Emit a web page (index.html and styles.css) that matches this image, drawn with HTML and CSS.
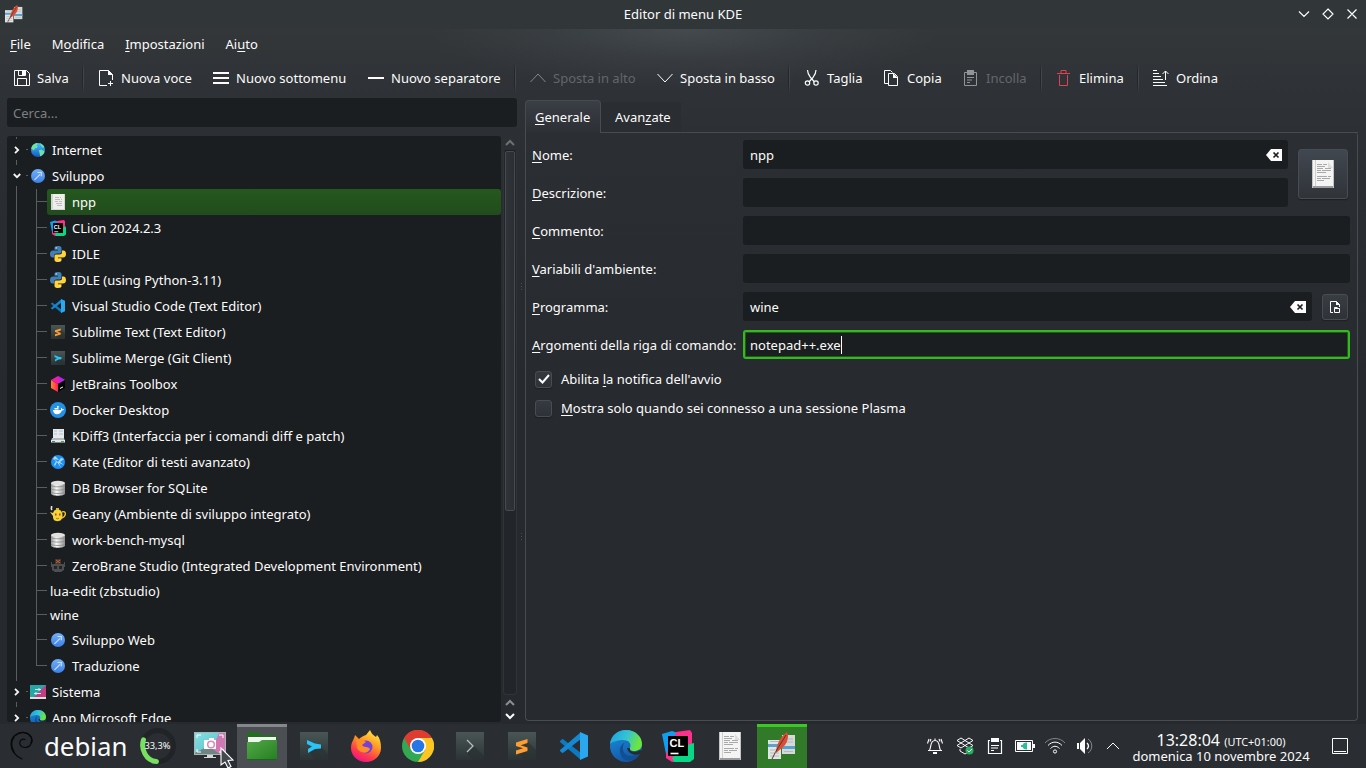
FILE: index.html
```html
<!DOCTYPE html>
<html lang="it">
<head>
<meta charset="utf-8">
<title>Editor di menu KDE</title>
<link rel="stylesheet" href="styles.css">
</head>
<body>
<svg class="defs" width="0" height="0" aria-hidden="true">
  <defs>
    <linearGradient id="gDark" x1="0" y1="0" x2="0" y2="1"><stop offset="0" stop-color="#4a5656"/><stop offset="1" stop-color="#2b3335"/></linearGradient>
    <linearGradient id="gGlobe" x1="0" y1="0" x2="0" y2="1"><stop offset="0" stop-color="#49c2ff"/><stop offset="1" stop-color="#1559c4"/></linearGradient>
    <linearGradient id="gDev" x1="0" y1="0" x2="0" y2="1"><stop offset="0" stop-color="#72b1fb"/><stop offset="1" stop-color="#3d7fe4"/></linearGradient>
    <linearGradient id="gDb" x1="0" y1="0" x2="1" y2="0"><stop offset="0" stop-color="#9a9a9a"/><stop offset=".4" stop-color="#fafafa"/><stop offset="1" stop-color="#8c8c8c"/></linearGradient>
    <linearGradient id="gEdgeTop" x1="0" y1="0" x2="1" y2=".3"><stop offset="0" stop-color="#1ba0dc"/><stop offset=".55" stop-color="#35c1d6"/><stop offset="1" stop-color="#6ce63c"/></linearGradient>
    <linearGradient id="gEdge" x1="0" y1="0" x2=".4" y2="1"><stop offset="0" stop-color="#1c93e0"/><stop offset="1" stop-color="#1358a8"/></linearGradient>
    <linearGradient id="gFox" x1=".8" y1="0" x2=".3" y2="1"><stop offset="0" stop-color="#fff04a"/><stop offset=".4" stop-color="#ff9a22"/><stop offset=".75" stop-color="#ff3a4c"/><stop offset="1" stop-color="#ee1186"/></linearGradient>
    <linearGradient id="gScreen" x1="0" y1="0" x2="1" y2="1"><stop offset="0" stop-color="#7fe0e4"/><stop offset="1" stop-color="#5cb9c6"/></linearGradient>
    <linearGradient id="gFolder" x1="0" y1="0" x2="1" y2="1"><stop offset="0" stop-color="#52a945"/><stop offset="1" stop-color="#257e24"/></linearGradient>
    <linearGradient id="gTool" x1="0" y1="0" x2="1" y2="0"><stop offset="0" stop-color="#ff8a1f"/><stop offset="1" stop-color="#fe1e62"/></linearGradient>
  </defs>
  <symbol id="menuedit" viewBox="0 0 28 28">
    <path d="M0 8h13v19H0z" fill="#e2e5e5"/><path d="M14 3h13v19H14z" fill="#d5d9da"/>
    <path d="M0 12h13v3H0zM14 14h13v3H14z" fill="#5aa3d0"/>
    <path d="M2 9.500h9M2 18h9M2 21h9M2 24h9M16 7h9M16 10h9M16 19.500h9" stroke="#b4babb" stroke-width="1"/>
    <path d="M19 0c2 3 1 9-2 13-2 3-6 5-9 8 0-8 4-16 11-21z" fill="#d65036"/><path d="M18 3C14 10 8 18 4 27" stroke="#6b2a22" stroke-width="1" fill="none"/>
  </symbol>
  <symbol id="globe" viewBox="0 0 16 16"><circle cx="8" cy="8" r="7" fill="url(#gGlobe)"/><path d="M1.200 6.500C2 3 4.500 1.200 7 1.100c1 .8.500 1.700-.600 2.100l1.300 1.200-1 1.500-2 .6-.8 2zM9.600 1.300c2 .4 4 2 4.800 4l-2 .2-1.400-2zM8.800 8.200l2.700-.700 3 2c-.6 2.400-2 4-4.400 4.800l-.4-2.600z" fill="#6de3a2"/></symbol>
  <symbol id="dev" viewBox="0 0 16 16"><circle cx="8" cy="8" r="7" fill="url(#gDev)"/><path d="M4.500 11.800l5.500-5.500M7.500 4.500h3.800v3.700" stroke="#c5dffe" stroke-width="1.200" fill="none"/></symbol>
  <symbol id="doc" viewBox="0 0 22 28"><path d="M0 0h22v28H0z" fill="#f4f4f4"/><path d="M0 26h22v2H0z" fill="#9b9b9b"/><path d="M.5 0v28M21.500 0v28" stroke="#c4c4c4"/><path d="M3.500 0v26" stroke="#cfcfcf"/><path d="M16 2l5 6h-5z" fill="#ddd"/><path d="M5 4.500h5m1 0h4M5 6.500h8M5 8.500h6m2 0h6M5 10.500h4m1 0h9M5 12.500h9M5 16.500h10m1 0h3M5 18.500h4m1 0h8M5 20.500h7" stroke="#a9a9a9"/></symbol>
  <symbol id="docs" viewBox="0 0 16 16"><path d="M1 0h14v16H1z" fill="#d3d4d3"/><path d="M3 0h11v15H3z" fill="#eeeeec"/><path d="M5 3.500h4m1 0h1M5 5.500h5m1 0h1M5 7.500h3m1 0h3M6 9.500h6M7 11.500h5" stroke="#bcbdbc"/></symbol>
  <symbol id="clion" viewBox="0 0 32 32"><path d="M0 4l10-3 9 3-6 20H4z" fill="#109ff0"/><path d="M14 2l14-2 2 3v14l-6 4L12 9z" fill="#fd318c"/><path d="M4 24l4-7 15 13-13 2-6-4z" fill="#fd318c"/><path d="M32 13v16l-4 3H12l-2-4 15-13z" fill="#08d885"/><path d="M6 6h20v20H6z"/><path d="M8.500 23.500h8" stroke="#fff" stroke-width="1.600"/><text x="7.500" y="17" class="clion-letters">CL</text></symbol>
  <symbol id="python" viewBox="0 0 16 16"><path d="M7.800 0c-2.500 0-3.300.7-3.300 2v1.700H8v.8H3C1 4.500 0 5.800 0 8c0 2.100.9 3.500 2.600 3.500H4V9.700c0-1.300 1-2.300 2.500-2.300h3.300c1 0 1.700-.7 1.700-1.700V2C11.500.6 10 0 7.800 0z" fill="#4080b7"/><path d="M8.200 16c2.500 0 3.300-.7 3.300-2v-1.700H8v-.8h5c2 0 3-1.300 3-3.500 0-2.100-.9-3.500-2.600-3.500H12v1.800c0 1.300-1 2.300-2.500 2.300H6.200c-1 0-1.700.7-1.700 1.700V14c0 1.400 1.500 2 3.700 2z" fill="#ffd43b"/><circle cx="6.200" cy="1.900" r=".7" fill="#fff"/><circle cx="9.800" cy="14.100" r=".7" fill="#fff"/></symbol>
  <symbol id="vscode" viewBox="0 0 28 28"><path d="M0 9l2.500-2.200L21 21v7L0 10z" fill="#0d79c1"/><path d="M0 19l2.500 2.200L21 7V0L0 18z" fill="#1488d2"/><path d="M20 0l8 3.500v21L20 28z" fill="#2aa7ef"/></symbol>
  <symbol id="subtext" viewBox="0 0 28 28"><path d="M0 0h28v28H0z" fill="url(#gDark)"/><path d="M20 10l8 8v10H18l-10-8z" fill="#293031" opacity=".6"/><path d="M8 10.500L19.500 7v4l-7 2.300 7 2.200v3.500L8 22.500V18.500l7-2.200-7-2.300z" fill="#ff9d2e"/></symbol>
  <symbol id="submerge" viewBox="0 0 28 28"><path d="M0 0h28v28H0z" fill="url(#gDark)"/><path d="M20 14l8 8v6H16L8 19z" fill="#293031" opacity=".6"/><path d="M7 8l8 3.500 6 1v4l-6 .5L8 21v-4l4-2.500L7 12z" fill="#28c4f7"/></symbol>
  <symbol id="term" viewBox="0 0 28 28"><path d="M0 0h28v28H0z" fill="url(#gDark)"/><path d="M18 14l10 10v4H17l-6-7z" fill="#2b3132" opacity=".7"/><path d="M11 8l6 6-6 6" fill="none" stroke="#b6bbbb" stroke-width="1.300"/></symbol>
  <symbol id="toolbox" viewBox="0 0 16 16"><path d="M1 4l7 4v8l-7-4z" fill="url(#gTool)"/><path d="M1 4l7-4 7 4-7 4z" fill="#f01fa0"/><path d="M8 0l7 4-5 3z" fill="#a72bea"/><path d="M8 8l7-4v8l-7 4z" fill="#050505"/><path d="M10 12.500l3-1.600" stroke="#fff"/></symbol>
  <symbol id="docker" viewBox="0 0 16 16"><circle cx="8" cy="8" r="8" fill="#2391e6"/><path d="M3 8h8c.3-1 .1-1.700-.3-2.200 1 .1 1.500.6 1.600 1.500.8-.2 1.400 0 1.800.2-.5.800-1.200 1.100-2.200 1.100C11 11 9.500 12.200 7 12.200S3.200 10.500 3 8zM4.500 6h4v1.500h-4zM7 4h1.700v1.700H7z" fill="#fff"/></symbol>
  <symbol id="kdiff" viewBox="0 0 16 16"><path d="M3 1h11v10H3z" fill="#e7eaeb"/><path d="M4 3h3m2 0h4M4 6h3m2 0h4" stroke="#a9c0d8"/><path d="M2 10h12l1 3H1z" fill="#b4babc"/><path d="M1 12h14v2.500H1z" fill="#e4e7e7"/><path d="M2 13.500h3" stroke="#4378a7"/><path d="M11 13.500h3" stroke="#44a15a"/></symbol>
  <symbol id="kate" viewBox="0 0 16 16"><circle cx="8" cy="8" r="7" fill="#1d91f3"/><path d="M5 2l4 4-5-1 4 3 3-4 3 1-4 3 4 3-5-2 2 5-4-6-2 4-1-1 2-4-3-2z" fill="#a9daff"/></symbol>
  <symbol id="db" viewBox="0 0 16 16"><path d="M1 3v10.500c0 3 14 3 14 0V3z" fill="url(#gDb)"/><ellipse cx="8" cy="3" rx="7" ry="2.200" fill="#e2e2e2"/><path d="M1 5.300c1 2 13 2 14 0M1 8.600c1 2 13 2 14 0M1 12c1 2 13 2 14 0" fill="none" stroke="#858585" stroke-width=".8"/></symbol>
  <symbol id="geany" viewBox="0 0 16 16"><path d="M4 5c1-2 6-2 7 0 2 2 2 7 0 9-1 1.500-6 1.500-7 0C3 13 3 11 3 10L0 6l3 1z" fill="#f3d53b"/><path d="M12 6c4-2 5 4 0 6" fill="none" stroke="#e9c431" stroke-width="1.400"/><path d="M1 0c2 1-1 2 1 4" fill="none" stroke="#e6e2d8" stroke-width="1.600"/><path d="M6 2h3v2H6z" fill="#d9b62c"/><path d="M5 7.500h1.500v2H5zM9 7.500h1.500v2H9z" fill="#c0391f"/><path d="M6 12c1 1 2 1 3 0" fill="none" stroke="#a86812"/></symbol>
  <symbol id="zero" viewBox="0 0 16 16"><path d="M5 1h6v5H5z" fill="#48352c"/><path d="M6 2l4 3m0-3L6 5" stroke="#c56335"/><path d="M2 6h12v6l-3 2H5l-3-2z" fill="#4c4e51"/><path d="M1.500 4v5m13-5v5" stroke="#4c4f51"/><path d="M4 8h3v3H4zM9 8h3v3H9z" fill="#222427"/></symbol>
  <symbol id="system" viewBox="0 0 16 14"><path d="M0 0h16v13H0z" fill="#27a6a5"/><path d="M16 0v13H3z" fill="#c43c83"/><path d="M0 12h16v2H0z" fill="#dedfe1"/><path d="M5 4.500h6M9 3v3M4 8.500h7M6 7v3" stroke="#d5ecec"/></symbol>
  <symbol id="edge" viewBox="0 0 32 32"><circle cx="16" cy="16" r="16" fill="url(#gEdge)"/><path d="M0 14C1 5 8 0 16 0c10 0 16 7 16 14 0 5-4 7-8 7-3 0-5-1-4-3 2-5-2-8-7-8C8 10 2 12 0 14z" fill="url(#gEdgeTop)"/><path d="M19 12c-8-2-9 14 2 14 4 0 7-2 9-3-4 10-18 11-20-1-1-5 3-11 9-10z" fill="#124f92"/><path d="M20 18c-1 4 6 5 10 2l2 1-2 3c-5 2-12 0-13-6z" fill="#282c31"/></symbol>
  <symbol id="clear" viewBox="0 0 16 12"><path d="M5 0h11v12H5L0 6z" fill="#fcfcfc"/><path d="M7.500 3.500l5 5m0-5l-5 5" stroke="#1b1e20" stroke-width="1.700"/></symbol>
  <symbol id="chev" viewBox="0 0 6 8"><path d="M1 .8L4.200 4 1 7.200" fill="none" stroke="#f4f4f4" stroke-width="1.800"/></symbol>
</svg>

<header class="titlebar">
  <svg class="app-icon" width="18" height="18"><use href="#menuedit"/></svg>
  <span>Editor di menu KDE</span>
  <svg class="winbtns" width="64" height="16" viewBox="0 0 64 16" fill="none" stroke="#fcfcfc" stroke-width="1.200"><path d="M5 5.500l5 5 5-5M34 3l5 5-5 5-5-5zM53.500 3.500l9 9m0-9l-9 9"/></svg>
</header>
<div class="window">
  <nav class="menubar"><span><u>F</u>ile</span><span>M<u>o</u>difica</span><span><u>I</u>mpostazioni</span><span>Ai<u>u</u>to</span></nav>
  <div class="toolbar">
    <span class="tool"><svg width="16" height="16" fill="none" stroke="#fcfcfc"><path d="M.5.500h12l3 3v12H.5zM4.500.500v5h7v-5M3.500 15.500v-7h9v7"/><path d="M8 1h3v4H8z" fill="#fcfcfc" stroke="none"/></svg>Salva</span>
    <i class="sep"></i>
    <span class="tool"><svg width="16" height="16" fill="none" stroke="#fcfcfc"><path d="M9 15.500H1.500V.500h9l4 4V10M12.500 11v5M10 13.500h5"/><path d="M10 0l5 5h-5z" fill="#fcfcfc" stroke="none"/></svg>Nuova voce</span>
    <span class="tool"><svg width="16" height="16"><path d="M0 2h16v2H0zm0 5h16v2H0zm0 5h16v2H0z" fill="#fcfcfc"/></svg>Nuovo sottomenu</span>
    <span class="tool"><svg width="16" height="16"><path d="M0 7h16v2H0z" fill="#fcfcfc"/></svg>Nuovo separatore</span>
    <i class="sep"></i>
    <span class="tool off"><svg width="16" height="16" fill="none" stroke="#85888a"><path d="M.500 12L8 4l7.500 8"/></svg>Sposta in alto</span>
    <span class="tool"><svg width="16" height="16" fill="none" stroke="#fcfcfc"><path d="M.500 4L8 12l7.500-8"/></svg>Sposta in basso</span>
    <i class="sep"></i>
    <span class="tool"><svg width="16" height="16" fill="none" stroke="#fcfcfc" stroke-width="1.200"><path d="M3.500 0c0 4 2 6 3.500 8l3.500 4M12 0c0 4-2 6-3.500 8L5 12"/><circle cx="3.500" cy="13" r="2.200"/><circle cx="12" cy="13" r="2.200"/></svg>Taglia</span>
    <span class="tool"><svg width="16" height="16" fill="none" stroke="#fcfcfc"><path d="M4.500 13.500h-4V.500h6l2 2M4.500 3.500h6l3 3v9h-9z"/><path d="M9 3l5 5H9z" fill="#fcfcfc" stroke="none"/></svg>Copia</span>
    <span class="tool off"><svg width="16" height="16" fill="none" stroke="#929496"><path d="M4 2.500H1.500v13h12v-13H11M4 7.500h7M4 10h5M4 12.500h3"/><path d="M4 0h7v5H4z" fill="#929496" stroke="none"/></svg>Incolla</span>
    <i class="sep"></i>
    <span class="tool"><svg width="16" height="16" fill="none" stroke="#da4453"><path d="M1 3.500h13M5 3V.500h5V3M3.500 5v10.500h8V5"/></svg>Elimina</span>
    <i class="sep"></i>
    <span class="tool"><svg width="16" height="16" fill="none" stroke="#fcfcfc"><path d="M0 .500h4M0 3.500h6M0 6.500h8M0 9.500h10M0 12.500h12M0 15.500h14M12.500 10V1M9.500 4l3-3 3 3"/></svg>Ordina</span>
  </div>
  <main class="content">
    <section class="left">
      <div class="search">Cerca...</div>
      <div class="tree-area">
        <div class="tree">
          <div class="row top first"><svg class="exp" width="6" height="8"><use href="#chev"/></svg><svg width="16" height="16"><use href="#globe"/></svg>Internet</div>
          <div class="row top"><svg class="exp open" width="6" height="8"><use href="#chev"/></svg><svg width="16" height="16"><use href="#dev"/></svg>Sviluppo</div>
          <div class="row sub selected"><span><svg width="16" height="16"><use href="#docs"/></svg>npp</span></div>
          <div class="row sub"><span><svg width="16" height="16"><use href="#clion"/></svg>CLion 2024.2.3</span></div>
          <div class="row sub"><span><svg width="16" height="16"><use href="#python"/></svg>IDLE</span></div>
          <div class="row sub"><span><svg width="16" height="16"><use href="#python"/></svg>IDLE (using Python-3.11)</span></div>
          <div class="row sub"><span><svg class="small" width="16" height="16"><use href="#vscode"/></svg>Visual Studio Code (Text Editor)</span></div>
          <div class="row sub"><span><svg class="small" width="16" height="16"><use href="#subtext"/></svg>Sublime Text (Text Editor)</span></div>
          <div class="row sub"><span><svg class="small" width="16" height="16"><use href="#submerge"/></svg>Sublime Merge (Git Client)</span></div>
          <div class="row sub"><span><svg width="16" height="16"><use href="#toolbox"/></svg>JetBrains Toolbox</span></div>
          <div class="row sub"><span><svg width="16" height="16"><use href="#docker"/></svg>Docker Desktop</span></div>
          <div class="row sub"><span><svg width="16" height="16"><use href="#kdiff"/></svg>KDiff3 (Interfaccia per i comandi diff e patch)</span></div>
          <div class="row sub"><span><svg width="16" height="16"><use href="#kate"/></svg>Kate (Editor di testi avanzato)</span></div>
          <div class="row sub"><span><svg width="16" height="16"><use href="#db"/></svg>DB Browser for SQLite</span></div>
          <div class="row sub"><span><svg width="16" height="16"><use href="#geany"/></svg>Geany (Ambiente di sviluppo integrato)</span></div>
          <div class="row sub"><span><svg width="16" height="16"><use href="#db"/></svg>work-bench-mysql</span></div>
          <div class="row sub"><span><svg width="16" height="16"><use href="#zero"/></svg>ZeroBrane Studio (Integrated Development Environment)</span></div>
          <div class="row sub plain"><span>lua-edit (zbstudio)</span></div>
          <div class="row sub plain"><span>wine</span></div>
          <div class="row sub"><span><svg width="16" height="16"><use href="#dev"/></svg>Sviluppo Web</span></div>
          <div class="row sub last"><span><svg width="16" height="16"><use href="#dev"/></svg>Traduzione</span></div>
          <div class="row top"><svg class="exp" width="6" height="8"><use href="#chev"/></svg><svg width="16" height="16"><use href="#system"/></svg>Sistema</div>
          <div class="row top"><svg class="exp" width="6" height="8"><use href="#chev"/></svg><svg width="16" height="16"><use href="#edge"/></svg>App Microsoft Edge</div>
        </div>
        <div class="scroll">
          <svg width="10" height="14" fill="none" stroke="#6d7173" stroke-width="2"><path d="M1 9l4-4 4 4"/></svg>
          <div class="groove"><div class="thumb"></div></div>
          <svg width="10" height="14" fill="none" stroke="#8b8e90" stroke-width="2"><path d="M1 10l4-4 4 4"/></svg>
          <svg width="10" height="13" fill="none" stroke="#fcfcfc" stroke-width="2"><path d="M1 5l4 4 4-4"/></svg>
        </div>
      </div>
    </section>
    <div class="splitter"><i></i><i></i></div>
    <section class="right">
      <div class="tabs"><span class="tab active"><u>G</u>enerale</span><span class="tab">Avan<u>z</u>ate</span><i class="rest"></i></div>
      <div class="panel">
        <div class="pair">
          <div class="pair-fields">
            <div class="field"><label><u>N</u>ome:</label><div class="input">npp<svg width="16" height="12"><use href="#clear"/></svg></div></div>
            <div class="field"><label><u>D</u>escrizione:</label><div class="input"></div></div>
          </div>
          <div class="iconbtn"><svg width="22" height="28"><use href="#doc"/></svg></div>
        </div>
        <div class="field"><label><u>C</u>ommento:</label><div class="input"></div></div>
        <div class="field"><label><u>V</u>ariabili d'ambiente:</label><div class="input"></div></div>
        <div class="field"><label><u>P</u>rogramma:</label><div class="input">wine<svg width="16" height="12"><use href="#clear"/></svg></div><div class="filebtn"><svg width="12" height="14" fill="none" stroke="#fcfcfc"><path d="M4 12.500H1.500v-11h6l3 3V7M5.500 8.500h5v4h-5zM5.500 8.500v-1h3"/><path d="M7 1l4 4H7z" fill="#fcfcfc" stroke="none"/></svg></div></div>
        <div class="field"><label><u>A</u>rgomenti della riga di comando:</label><div class="input focus">notepad++.exe<i class="caret"></i></div></div>
        <div class="check"><i class="box"><svg width="12" height="12" fill="none" stroke="#fcfcfc" stroke-width="2"><path d="M1 6l3.500 3.500L11 2"/></svg></i><span>Abilita <u>l</u>a notifica dell'avvio</span></div>
        <div class="check"><i class="box"></i><span><u>M</u>ostra solo quando sei connesso a una sessione Plasma</span></div>
      </div>
    </section>
  </main>
</div>
<footer class="taskbar">
  <div class="brand"><svg width="24" height="30" viewBox="0 0 24 30" fill="none" stroke="#08090a" stroke-linecap="round"><path d="M12 28C5 25 1 19 1 13 1 6 7 2 12 1.500c6-.5 10 4 10 8 0 4-3 7-7 7-4 0-6-3-5-6 1-2 3-3 5-2" stroke-width="1.200"/><path d="M6 4c4-4 12-3 15 2 1 2 1 4 0 6M4 6c-3 4-3 10 0 15" stroke-width="1.500"/></svg><span>debian</span></div>
  <div class="gauge"><svg width="38" height="38" viewBox="0 0 38 38" fill="none"><circle cx="19" cy="19" r="15.500" stroke="#202427" stroke-width="5"/><path d="M4.500 12.800C1.500 22 7 34 17.500 34.500" stroke="#78df61" stroke-width="5" stroke-linecap="round"/></svg><span>33,3%</span></div>
  <div class="tasks">
    <span class="task"><svg width="32" height="30" viewBox="0 0 32 30"><path d="M0 1h32v23H0z" fill="#a9b4b6"/><path d="M1 2h30v21H1z" fill="url(#gScreen)"/><path d="M25 2h6v21H16z" fill="#d078b4"/><path d="M1 22l13-7 12 8H1z" fill="#6f8583"/><path d="M3 7V4h4m18 0h4v3M3 18v3h4m18 0h4v-3" fill="none" stroke="#fff"/><path d="M10 9h5V7h5v2h2v9H10z" fill="#fff"/><circle cx="17" cy="13.500" r="3.300" fill="none" stroke="#e088b7" stroke-width="1.500"/><path d="M13 24h6v2h3v1H10v-1h3z" fill="#d6d8d9"/></svg></span>
    <span class="task running"><svg width="30" height="28" viewBox="0 0 30 28"><path d="M0 0h12l2 3h16v9H0z" fill="#236c22"/><path d="M1 5h28v6H1z" fill="#f1f5f0"/><path d="M0 10h12l3-2h15v20H0z" fill="url(#gFolder)"/><path d="M0 27.500h30" stroke="#1c651b"/></svg></span>
    <span class="task"><svg width="28" height="28"><use href="#submerge"/></svg></span>
    <span class="task"><svg width="32" height="32" viewBox="0 0 32 32"><path d="M5 5l4 4c2-2 4-3 7-4l4-5c1 3 3 5 6 7l1-2c3 3 4 8 4 13 0 8-7 14-15 14S1 26 1 18C1 12 4 10 5 5z" fill="url(#gFox)"/><circle cx="16" cy="17" r="6.500" fill="#7542d9"/><path d="M6 10c4-1 7 0 10 2l-4 3c2 3 6 1 8 4-2 5-10 5-13-1z" fill="#ff8e28"/></svg></span>
    <span class="task"><svg width="32" height="32" viewBox="0 0 32 32"><circle cx="16" cy="16" r="16" fill="#32a852"/><path d="M2.100 8A16 16 0 0 1 29.900 8H16l-7 12z" fill="#df3c31"/><path d="M16 8h13.900A16 16 0 0 1 16 32l7-12z" fill="#fcc522"/><circle cx="16" cy="16" r="8" fill="#fff"/><circle cx="16" cy="16" r="6.300" fill="#2577e8"/></svg></span>
    <span class="task"><svg width="28" height="28"><use href="#term"/></svg></span>
    <span class="task"><svg width="28" height="28"><use href="#subtext"/></svg></span>
    <span class="task"><svg width="28" height="28"><use href="#vscode"/></svg></span>
    <span class="task"><svg width="32" height="32"><use href="#edge"/></svg></span>
    <span class="task"><svg width="32" height="32"><use href="#clion"/></svg></span>
    <span class="task"><svg width="22" height="28"><use href="#doc"/></svg></span>
    <span class="task focused"><svg width="28" height="28"><use href="#menuedit"/></svg></span>
  </div>
  <div class="tray">
    <svg width="20" height="20" viewBox="0 0 20 20" fill="none" stroke="#fcfcfc"><path d="M3 14.500h14M4.500 14c2-2 0-9.500 5.500-9.500s3.500 7.500 5.500 9.500M4 3L2.500 7.500M6 3L5 5.500M16 3l1.500 4.500M14 3l1 2.500M10 4V2.500" stroke-width="1.100"/><path d="M8 16h4v2H8z" fill="#fcfcfc" stroke="none"/></svg>
    <svg width="20" height="20" viewBox="0 0 20 20" fill="none" stroke="#fcfcfc"><path d="M2 4.500L6 2l4 2.500L6 7zM10 4.500L14 2l4 2.500L14 7zM2 9.500L6 7l4 2.500L6 12zM10 9.500L14 7l4 2.500L14 12zM5 13v2l5 3 4-2.500"/><circle cx="14.500" cy="14.500" r="4" fill="#27ae60" stroke="none"/><path d="M12.500 14.500l1.500 1.500 3-3"/></svg>
    <svg width="20" height="20" viewBox="0 0 20 20" fill="none" stroke="#fcfcfc"><path d="M5 4.500h-1.500v13h13v-13H15M6 9.500h8M6 12h7M6 14.500h3" stroke-width="1.200"/><path d="M6 2h8v4H6z" fill="#fcfcfc" stroke="none"/></svg>
    <svg width="20" height="20" viewBox="0 0 20 20" fill="none" stroke="#fcfcfc"><path d="M.500 4.500h17v11H.500z"/><path d="M2 6h14v8H2zM18 8h2v4h-2z" fill="#fcfcfc" stroke="none"/><path d="M12 6.500v7c-3 0-4-1-4.300-2.500H6V9h1.700C8 7.500 9 6.500 12 6.500z" fill="#2cbd9a" stroke="none"/></svg>
    <svg width="22" height="20" viewBox="0 0 22 20" fill="none" stroke="#fcfcfc"><circle cx="11" cy="15.500" r="1.600"/><path d="M6.500 12.500c3-3 6-3 9 0M4 9.500c4-4.500 10-4.500 14 0"/><path d="M1 7c5-6 15-6 20 0" stroke="#808588"/></svg>
    <svg width="20" height="20" viewBox="0 0 20 20" fill="none" stroke="#fcfcfc"><path d="M2 7h2v6H2zM5 7l5-5v16l-5-5z" fill="#fcfcfc" stroke="none"/><path d="M12 7c2 2 2 4 0 6" stroke-width="1.300"/><path d="M13 3c5 3 5 11 0 14" stroke="#85898b"/></svg>
    <svg width="14" height="20" viewBox="0 0 14 20" fill="none" stroke="#fcfcfc"><path d="M1 13l6-6 6 6"/></svg>
  </div>
  <div class="clock"><div class="time">13:28:04 <small>(UTC+01:00)</small></div><div class="date">domenica 10 novembre 2024</div></div>
  <svg class="showdesk" width="16" height="16" fill="none" stroke="#fcfcfc"><path d="M.500.500h15v15H.500zM2 13.500h12"/></svg>
</footer>
<svg class="cursor" width="16" height="22" viewBox="0 0 16 22"><path d="M1 1v17l4-3 3 6 3-1.500-3-6 5-.500z" fill="#44484c" stroke="#fff" stroke-width="1.100"/></svg>
</body>
</html>
```
FILE: styles.css
```css
* { box-sizing: border-box; }
html, body { margin: 0; height: 768px; overflow: hidden; }
body {
  width: 1366px;
  display: flex;
  flex-direction: column;
  background: #26292d;
  color: #fcfcfc;
  font: 13px/18px "Noto Sans", "Open Sans", sans-serif;
  white-space: nowrap;
}
svg { display: block; flex: none; }
.defs { position: absolute; }
i { display: block; }
u { text-decoration: underline; text-decoration-thickness: 1px; text-underline-offset: 2px; text-decoration-skip-ink: none; }
.clion-letters { font: bold 11px "Liberation Sans", Arial, sans-serif; fill: #fff; }

.titlebar {
  height: 29px;
  padding: 0 8px 1px 5px;
  display: grid;
  grid-template-columns: 1fr auto 1fr;
  align-items: center;
  background: #313639;
}
.titlebar span { padding-left: 3px; }
.winbtns { justify-self: end; }

.window {
  flex: 1;
  min-height: 0;
  display: flex;
  flex-direction: column;
  background:
    radial-gradient(ellipse 256px 60px at 50% 0, rgba(92, 100, 106, .42), rgba(92, 100, 106, .16) 50%, transparent),
    linear-gradient(#33373a 0, #2e3135 68px, #2a2d31 150px, #26292d 350px);
}
.menubar { height: 30px; padding-left: 10px; display: flex; gap: 21px; align-items: center; }
.toolbar {
  height: 38px;
  padding-left: 14px;
  display: grid;
  grid-template-columns: 68px 16px 115px 155px 146px 16px 127px 131px 16px 80px 79px 77px 16px 81px 16px 80px;
  align-items: center;
}
.tool { display: flex; align-items: center; gap: 7px; }
.tool.off { color: #63676a; }
.sep {
  width: 2px;
  height: 30px;
  background:
    linear-gradient(transparent, #24272a 30% 70%, transparent) 0 0 / 1px 100% no-repeat,
    linear-gradient(transparent, #43474b 30% 70%, transparent) 1px 0 / 1px 100% no-repeat;
}

.content { flex: 1; min-height: 0; display: flex; padding: 1px 8px 0 7px; }
.left { width: 510px; display: flex; flex-direction: column; }
.search { height: 29px; padding: 6px; border-radius: 3px; background: #1b1e20; color: #7d8082; }
.tree-area { flex: 1; min-height: 0; margin-top: 9px; padding-bottom: 2px; display: flex; }
.tree { width: 494px; overflow: hidden; background: #1b1e20; border-radius: 3px; padding-top: 1px; }
.row { height: 26px; display: flex; align-items: center; }
.top {
  padding-left: 7px;
  gap: 6px;
  background:
    linear-gradient(#595d60, #595d60) 19px 12px / 2px 1px no-repeat,
    linear-gradient(#595d60 2px, transparent 2px 23px, #595d60 23px) 9px 0 / 1px 26px no-repeat;
}
.top .exp { margin-right: 4px; }
.exp.open { transform: rotate(90deg); }
.sub {
  padding-left: 40px;
  background:
    linear-gradient(#595d60, #595d60) 9px 0 / 1px 100% no-repeat,
    linear-gradient(#595d60, #595d60) 29px 0 / 1px 100% no-repeat,
    linear-gradient(#595d60, #595d60) 30px 12px / 10px 1px no-repeat;
}
.sub.last {
  background:
    linear-gradient(#595d60, #595d60) 9px 0 / 1px 100% no-repeat,
    linear-gradient(#595d60, #595d60) 29px 0 / 1px 12px no-repeat,
    linear-gradient(#595d60, #595d60) 29px 12px / 11px 1px no-repeat;
}
.sub span { flex: 1; height: 100%; padding-left: 3px; display: flex; align-items: center; gap: 6px; }
.small { padding: 1px; }
.plain { height: 24px; background-position: 9px 0, 29px 0, 30px 11px; }
.selected span { background: linear-gradient(#25581f, #214c1c); border-radius: 3px; }

.scroll { flex: 1; display: flex; flex-direction: column; align-items: center; padding-left: 2px; }
.groove { flex: 1; width: 14px; padding: 0 1px; border: 1px solid #303438; border-top-color: #1d2023; border-radius: 4px; background: #22262a; }
.thumb { height: 360px; width: 10px; border: 1px solid #474b4f; border-radius: 2px; background: linear-gradient(90deg, #303439, #2b2f33); }

.splitter { width: 8px; padding: 184px 0 0 3px; }
.splitter i { width: 3px; height: 9px; margin-bottom: 241px; background: radial-gradient(circle, #4a4e52 .7px, transparent 1px) 0 0 / 3px 3px; }

.right { width: 833px; display: flex; flex-direction: column; padding: 2px 0 3px; }
.tabs { display: flex; height: 33px; align-items: stretch; }
.tab { width: 80px; margin-top: 2px; padding: 6px 0 0 14px; background: #2a2d31; border-bottom: 1px solid #484c50; border-radius: 0 3px 0 0; }
.tab.active { width: 76px; margin-top: 0; padding: 7px 0 0 9px; background: linear-gradient(#3a3e45, #2c2f34); border: 1px solid #484c50; border-bottom: 0; border-radius: 4px 4px 0 0; }
.rest { flex: 1; border-bottom: 1px solid #484c50; }
.panel { flex: 1; border: 1px solid #484c50; border-top: 0; border-radius: 0 3px 4px 4px; background: linear-gradient(#2b2e32, #272a2e 250px); padding: 7px 7px 0 6px; }
.pair { display: flex; gap: 10px; }
.pair-fields { flex: 1; }
.field { height: 29px; margin-bottom: 9px; display: flex; align-items: center; }
.field label { width: 211px; }
.input { flex: 1; height: 29px; padding: 0 6px 0 7px; display: flex; align-items: center; background: #1b1e20; border-radius: 3px; }
.input svg { margin-left: auto; }
.input.focus { border: 2px solid #34b91f; padding-left: 5px; box-shadow: inset 0 0 0 1px #205b1b; }
.caret { width: 1px; height: 18px; background: #fcfcfc; }
.iconbtn { width: 50px; height: 50px; margin: 9px 2px 0 0; display: grid; place-items: center; border: 1px solid #484d53; border-radius: 3px; background: linear-gradient(#414750, #303439); box-shadow: 0 1px 1px #1d2023; }
.filebtn { width: 26px; height: 26px; margin: 0 2px 0 10px; display: grid; place-items: center; border: 1px solid #484d53; border-radius: 3px; background: linear-gradient(#383d44, #2f3338); box-shadow: 0 1px 1px #1d2023; }
.check { display: flex; align-items: center; gap: 9px; height: 18px; margin: 11px 0 11px 3px; }
.check .box { width: 17px; height: 17px; display: grid; place-items: center; border: 1px solid #484d52; border-radius: 3px; background: linear-gradient(#353a41, #2e3237); box-shadow: 0 1px 1px #1d2023; }
.check + .check { margin-top: 0; }

.taskbar { height: 44px; display: flex; background: #2a2e32; }
.brand { width: 130px; padding-left: 10px; display: flex; gap: 10px; align-items: center; }
.brand span { font-size: 25.800px; line-height: 36px; }
.gauge { width: 55px; display: grid; place-items: center; }
.gauge > * { grid-area: 1 / 1; }
.gauge span { font-size: 9.300px; }
.tasks { display: flex; gap: 2px; }
.task { width: 50px; display: grid; place-items: center; }
.running { background: linear-gradient(#85888a 3px, #4b4f53 3px); }
.focused { background: linear-gradient(#3cc823 3px, #317a2a 3px); }
.tray { margin-left: 118px; display: flex; align-items: center; gap: 10px; }
.tray svg:nth-child(5) { margin: 0 -1px; }
.tray svg:last-child { margin-left: 1px; }
.clock { width: 180px; margin-left: 11px; padding-top: 7px; text-align: center; }
.time { font-size: 16px; line-height: 18px; }
.time small { font-size: 10.900px; }
.date { line-height: 11px; }
.showdesk { margin: 14px 18px 0 auto; }
.cursor { position: absolute; left: 220px; top: 747px; }
```
